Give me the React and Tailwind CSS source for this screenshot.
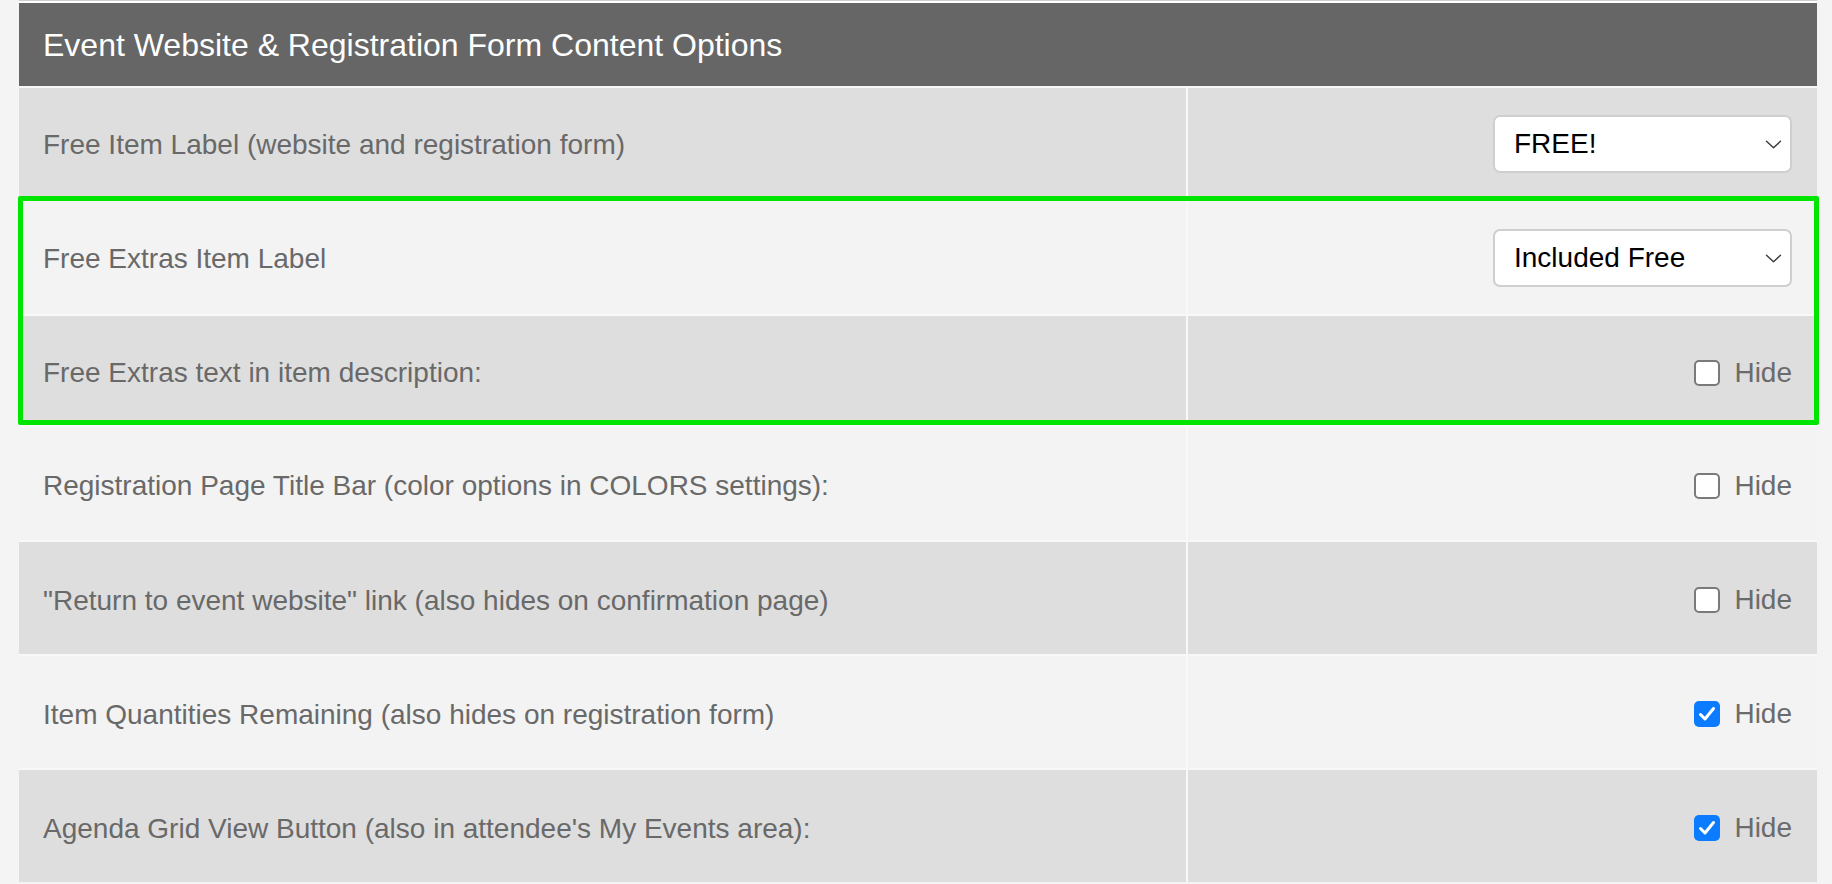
import React from 'react';

const FONT = { fontFamily: '"Liberation Sans", Arial, Helvetica, sans-serif' };

const Chevron = () => (
  <svg width="17" height="9" viewBox="0 0 17 9" fill="none" className="shrink-0">
    <path d="M1.5 1.2 L8.5 7.8 L15.5 1.2" stroke="#3a3a3a" strokeWidth="1.4" strokeLinecap="round" strokeLinejoin="round" />
  </svg>
);

const SelectBox = ({ value }) => (
  <div className="flex h-[58px] w-[299px] items-center justify-between rounded-[7px] border-2 border-[#cfcfcf] bg-white pl-[19px] pr-[8px] text-[28px] text-black">
    <span>{value}</span>
    <Chevron />
  </div>
);

const HideCheck = ({ checked }) => (
  <label className="flex items-center gap-[14px] text-[28px] text-[#6b6b6b]">
    {checked ? (
      <span className="flex h-[26px] w-[26px] items-center justify-center rounded-[5px] bg-[#0b7bff]">
        <svg width="18" height="16" viewBox="0 0 18 16" fill="none">
          <path d="M2.5 8.5 L7 13 L15.5 2.5" stroke="#fff" strokeWidth="3" strokeLinecap="round" strokeLinejoin="round" />
        </svg>
      </span>
    ) : (
      <span className="h-[26px] w-[26px] rounded-[5px] border-2 border-[#7a7a7a] bg-white" />
    )}
    <span>Hide</span>
  </label>
);

const Row = ({ label, dark, height, children }) => (
  <div className={`flex gap-[2px] ${height}`}>
    <div className={`flex w-[1167px] items-center pl-[24px] pt-[5px] text-[28px] text-[#696969] ${dark ? 'bg-[#dedede]' : 'bg-[#f3f3f3]'}`}>
      {label}
    </div>
    <div className={`flex flex-1 items-center justify-end pr-[25px] pt-[4px] ${dark ? 'bg-[#dedede]' : 'bg-[#f3f3f3]'}`}>
      {children}
    </div>
  </div>
);

const App = () => {
  return (
    <div className="min-h-screen w-full overflow-hidden bg-[#f4f4f4] pl-[19px] pr-[15px]" style={FONT}>
      <div className="h-px bg-[#cfcfcf]" />
      <div className="h-[2px] bg-white" />

      {/* Section header */}
      <div className="flex h-[83px] items-center bg-[#666666] pl-[24px] text-[32px] text-white">
        Event Website &amp; Registration Form Content Options
      </div>

      <div className="flex flex-col gap-[2px] bg-[#f8f8f8] pt-[2px]">
        <Row label="Free Item Label (website and registration form)" dark height="h-[108px]">
          <SelectBox value="FREE!" />
        </Row>

        {/* Highlighted group */}
        <div className="relative flex flex-col gap-[2px]">
          <Row label="Free Extras Item Label" height="h-[116px]">
            <SelectBox value="Included Free" />
          </Row>
          <Row label="Free Extras text in item description:" dark height="h-[109px]">
            <HideCheck />
          </Row>
          <div className="pointer-events-none absolute -left-px -right-[2px] -top-[2px] bottom-0 rounded-[2px] border-[5px] border-[#00e500]" />
        </div>

        <Row label="Registration Page Title Bar (color options in COLORS settings):" height="h-[113px]">
          <HideCheck />
        </Row>
        <Row label={'"Return to event website" link (also hides on confirmation page)'} dark height="h-[112px]">
          <HideCheck />
        </Row>
        <Row label="Item Quantities Remaining (also hides on registration form)" height="h-[112px]">
          <HideCheck checked />
        </Row>
        <Row label="Agenda Grid View Button (also in attendee's My Events area):" dark height="h-[112px]">
          <HideCheck checked />
        </Row>
      </div>
    </div>
  );
};

export default App;
